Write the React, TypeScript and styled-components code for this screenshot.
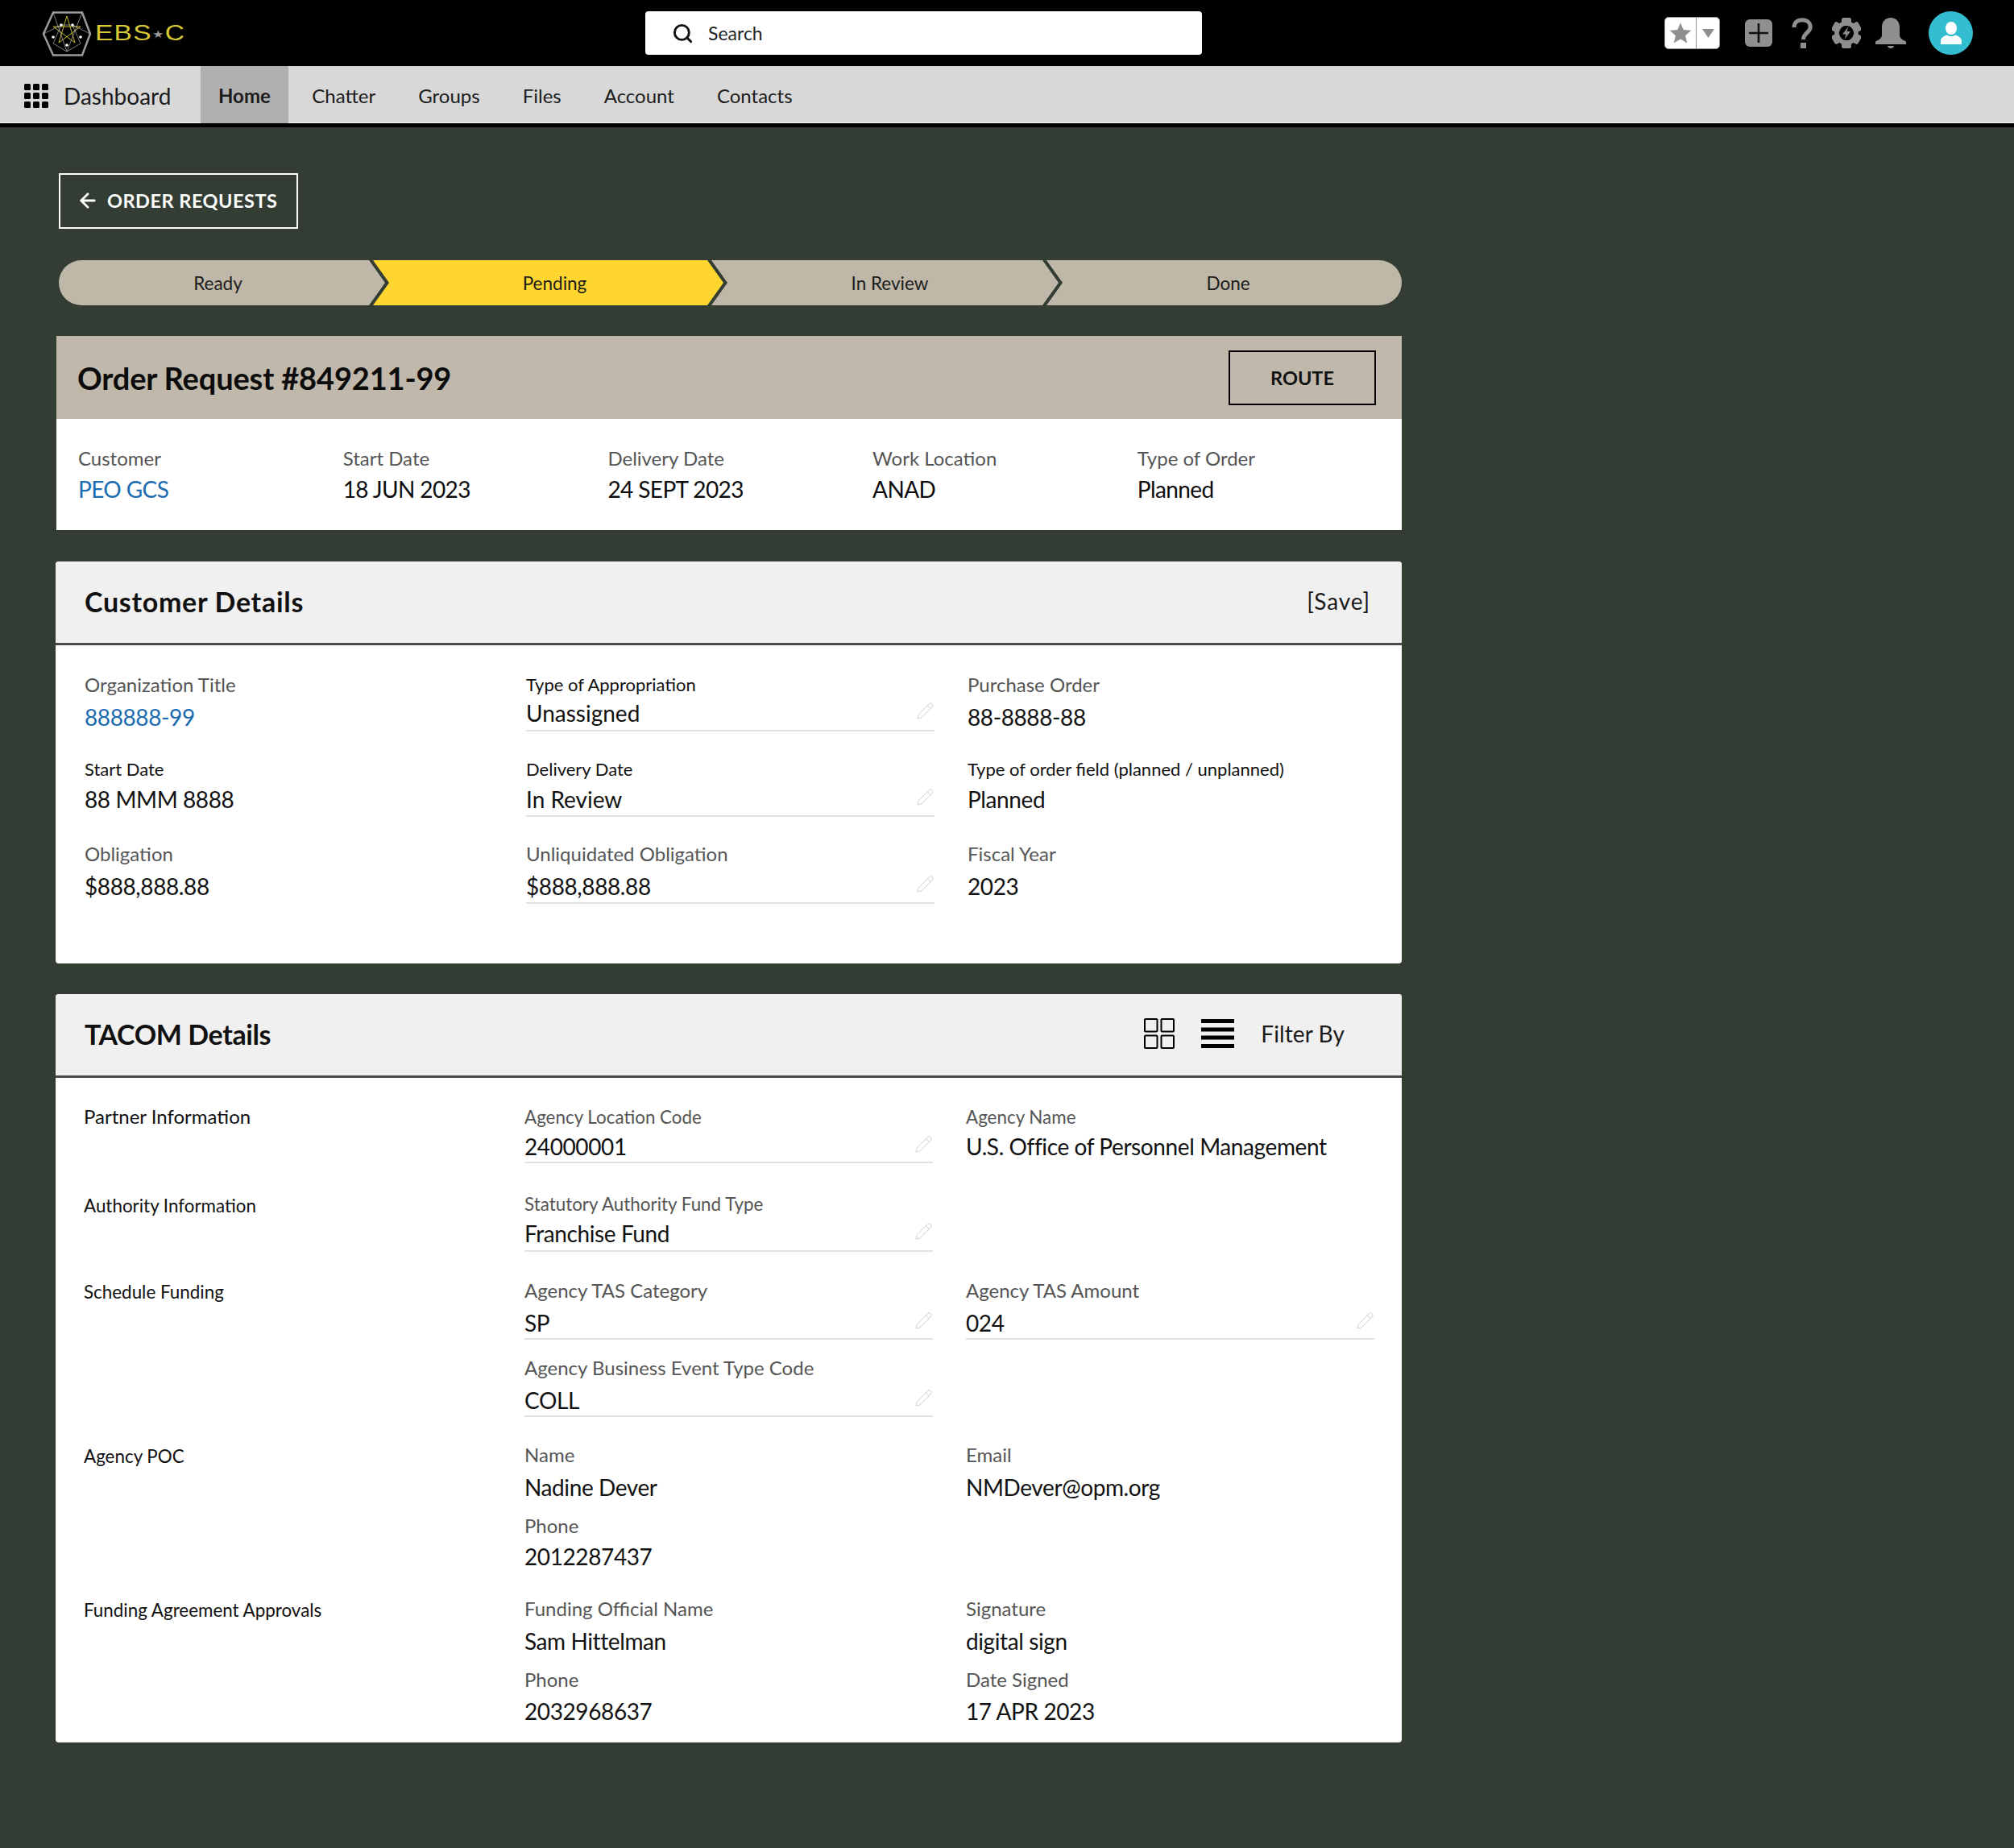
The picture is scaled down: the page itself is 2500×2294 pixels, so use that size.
import React from 'react';
import styled, { createGlobalStyle } from 'styled-components';
import { ArrowLeft, Pencil, Search } from 'lucide-react';

const GlobalStyle = createGlobalStyle`
  html, body { margin: 0; padding: 0; background: #333d34; }
  body { font-family: Lato, "Open Sans", sans-serif; color: #000; }
  * { box-sizing: border-box; }
`;

const Logo = () => (
  <LogoWrap>
    <svg width="62" height="56" viewBox="0 0 62 56" fill="none">
      <polygon points="14,1.5 50,1.5 60,28 50,54.500 14,54.500 2,28" stroke="#9a9a9a" strokeWidth="2.5" />
      <polygon points="31,6 41,39 14,19 48,19 21,39" stroke="#d8c93a" strokeWidth="0.9" />
      <path d="M24 17 L14 40 L31 50 L48 40 L38 17 Z M2 28 L24 17 M60 28 L38 17 M14 1.5 L31 50 M50 1.5 L31 50" stroke="#cfcfcf" strokeWidth="0.6" />
      {[[24, 17], [38, 17], [14, 32], [48, 32], [31, 42]].map(([cx, cy]) => (
        <circle key={`${cx}-${cy}`} cx={cx} cy={cy} r="1.8" fill="#fff" />
      ))}
    </svg>
    <LogoText>EBS<LogoStar>★</LogoStar>C</LogoText>
  </LogoWrap>
);

const AppsIcon = () => (
  <svg width="30" height="30" viewBox="0 0 30 30" fill="#000">
    {[0, 11, 22].map(y => [0, 11, 22].map(x => (
      <rect key={`${x}-${y}`} x={x} y={y} width="8" height="8" rx="1.5" />
    )))}
  </svg>
);

const HeaderIcons = () => (
  <IconBar>
    <FavButton>
      <FavPart $width={39}>
        <svg width="28" height="28" viewBox="0 0 24 24" fill="#8f8f8f">
          <polygon points="12,1 15.200,8.600 23.500,9.300 17.200,14.700 19.100,22.800 12,18.500 4.900,22.800 6.800,14.700 0.500,9.300 8.800,8.600" />
        </svg>
      </FavPart>
      <FavDivider />
      <FavPart $width={28}>
        <svg width="15" height="11" viewBox="0 0 15 11" fill="#8f8f8f"><polygon points="0,0 15,0 7.500,11" /></svg>
      </FavPart>
    </FavButton>
    <svg width="34" height="34" viewBox="0 0 34 34">
      <rect width="34" height="34" rx="6" fill="#8f8f8f" />
      <path d="M17 5v24M5 17h24" stroke="#111" strokeWidth="2.6" />
    </svg>
    <svg width="26" height="38" viewBox="0 0 26 38" fill="none">
      <path d="M3 12C3 6 7 2.800 13 2.800S23.200 6 23.200 11.500c0 7-8.700 7.500-8.700 15.500" stroke="#8f8f8f" strokeWidth="5" />
      <rect x="11" y="31" width="7" height="7" fill="#8f8f8f" />
    </svg>
    <svg width="36" height="38" viewBox="0 0 36 38">
      <g fill="#8f8f8f">
        {[0, 60, 120, 180, 240, 300].map(a => (
          <rect key={a} x="12" y="0" width="12" height="10" rx="2.500" transform={`rotate(${a} 18 19)`} />
        ))}
      </g>
      <circle cx="18" cy="19" r="12" fill="none" stroke="#8f8f8f" strokeWidth="5.500" />
      <path d="M20.500 11 L13 20.500 H17.500 L15.500 27 L23 17 H18.500 Z" fill="#8f8f8f" />
    </svg>
    <BellIcon width="38" height="38" viewBox="0 0 38 38" fill="#8f8f8f">
      <path d="M19 0c7 0 11 5 11 12v9c0 4 2.500 6 8 8.500V33H0v-3.500C5.500 27 8 25 8 21v-9C8 5 12 0 19 0Z" />
      <path d="M15 35h8c-.5 2-2 3-4 3s-3.500-1-4-3Z" />
    </BellIcon>
    <Avatar>
      <svg width="26" height="28" viewBox="0 0 26 28" fill="#fff">
        <ellipse cx="13" cy="8" rx="7" ry="8" />
        <path d="M0 28v-4c0-4 4-6.500 8-7.500 3 2 7 2 10 0 4 1 8 3.500 8 7.500v4Z" />
      </svg>
    </Avatar>
  </IconBar>
);

const steps = [
  { label: 'Ready', width: 405, shift: -5 },
  { label: 'Pending', width: 435, shift: 8, active: true },
  { label: 'In Review', width: 431, shift: 6 },
  { label: 'Done', width: 443, shift: 4 },
];

const summary = [
  { label: 'Customer', value: 'PEO GCS', link: true },
  { label: 'Start Date', value: '18 JUN 2023' },
  { label: 'Delivery Date', value: '24 SEPT 2023' },
  { label: 'Work Location', value: 'ANAD' },
  { label: 'Type of Order', value: 'Planned' },
];

type FieldProps = {
  label: string;
  value: string;
  height: number;
  strong?: boolean;
  small?: boolean;
  link?: boolean;
  editable?: boolean;
  loose?: boolean;
  gap?: number;
  valueHeight?: number;
};

const Field = ({ label, value, height, strong, small, link, editable, loose, gap = 4, valueHeight = 39 }: FieldProps) => (
  <FieldBox $height={height}>
    <FieldLabel $strong={strong} $small={small}>{label}</FieldLabel>
    <FieldValue $link={link} $editable={editable} $loose={loose} $gap={gap} $height={valueHeight}>
      {value}
      {editable && <EditIcon size={23} strokeWidth={1} color="#c9cdd1" />}
    </FieldValue>
  </FieldBox>
);

const App: React.FC = () => (
  <>
    <GlobalStyle />
    <TopBar>
      <Logo />
      <SearchBox>
        <Search size={27} strokeWidth={2.6} color="#111" />
        Search
      </SearchBox>
      <HeaderIcons />
    </TopBar>
    <NavBar>
      <AppName><AppsIcon />Dashboard</AppName>
      <NavItem $active>Home</NavItem>
      <NavItem>Chatter</NavItem>
      <NavItem>Groups</NavItem>
      <NavItem>Files</NavItem>
      <NavItem>Account</NavItem>
      <NavItem>Contacts</NavItem>
    </NavBar>

    <Page>
      <BackButton><ArrowLeft size={28} strokeWidth={2.4} />ORDER REQUESTS</BackButton>

      <Stepper>
        {steps.map((step, i) => (
          <Step key={step.label} $width={step.width} $shift={step.shift} $active={step.active} $first={i === 0} $last={i === steps.length - 1}>
            {step.label}
          </Step>
        ))}
      </Stepper>

      <OrderCard>
        <OrderHeader>
          <OrderTitle>Order Request #849211-99</OrderTitle>
          <RouteButton>ROUTE</RouteButton>
        </OrderHeader>
        <SummaryRow>
          {summary.map(item => (
            <div key={item.label}>
              <SummaryLabel>{item.label}</SummaryLabel>
              <SummaryValue $link={item.link}>{item.value}</SummaryValue>
            </div>
          ))}
        </SummaryRow>
      </OrderCard>

      <Card>
        <CardHeader>
          <CardTitle>Customer Details</CardTitle>
          <HeaderText>[Save]</HeaderText>
        </CardHeader>
        <CustomerGrid>
          <Field label="Organization Title" value="888888-99" height={105} link gap={7} />
          <Field label="Type of Appropriation" value="Unassigned" height={105} strong small editable loose gap={2} valueHeight={41} />
          <Field label="Purchase Order" value="88-8888-88" height={105} gap={7} />
          <Field label="Start Date" value="88 MMM 8888" height={105} strong small />
          <Field label="Delivery Date" value="In Review" height={105} strong small editable loose valueHeight={40} />
          <Field label="Type of order field (planned / unplanned)" value="Planned" height={105} strong small />
          <Field label="Obligation" value="$888,888.88" height={122} gap={7} />
          <Field label="Unliquidated Obligation" value="$888,888.88" height={122} editable gap={7} valueHeight={40} />
          <Field label="Fiscal Year" value="2023" height={122} gap={7} />
        </CustomerGrid>
      </Card>

      <Card $last>
        <CardHeader>
          <CardTitle $tight>TACOM Details</CardTitle>
          <ViewTools>
            <svg width="38" height="38" viewBox="0 0 38 38" fill="none" stroke="#000" strokeWidth="2">
              <rect x="1" y="1" width="15.500" height="15.500" rx="1" />
              <rect x="21.500" y="1" width="15.500" height="15.500" rx="1" />
              <rect x="1" y="21.500" width="15.500" height="15.500" rx="1" />
              <rect x="21.500" y="21.500" width="15.500" height="15.500" rx="1" />
            </svg>
            <svg width="41" height="36" viewBox="0 0 41 36" fill="#000">
              <rect width="41" height="5" />
              <rect y="10.500" width="41" height="5" />
              <rect y="20.500" width="41" height="5" />
              <rect y="31" width="41" height="5" />
            </svg>
            <HeaderText $tight>Filter By</HeaderText>
          </ViewTools>
        </CardHeader>
        <TacomBody>
          <TacomRow>
            <RowTitle $large>Partner Information</RowTitle>
            <Field label="Agency Location Code" value="24000001" height={108} small editable gap={3} />
            <Field label="Agency Name" value="U.S. Office of Personnel Management" height={108} small gap={3} />
          </TacomRow>
          <TacomRow>
            <RowTitle>Authority Information</RowTitle>
            <Field label="Statutory Authority Fund Type" value="Franchise Fund" height={107} small editable gap={3} valueHeight={41} />
          </TacomRow>
          <TacomRow>
            <RowTitle>Schedule Funding</RowTitle>
            <Field label="Agency TAS Category" value="SP" height={96} editable gap={7} />
            <Field label="Agency TAS Amount" value="024" height={96} editable gap={7} />
          </TacomRow>
          <TacomRow>
            <span />
            <Field label="Agency Business Event Type Code" value="COLL" height={108} editable gap={7} />
          </TacomRow>
          <TacomRow>
            <RowTitle>Agency POC</RowTitle>
            <div>
              <Field label="Name" value="Nadine Dever" height={88} gap={7} />
              <Field label="Phone" value="2012287437" height={103} gap={5} />
            </div>
            <Field label="Email" value="NMDever@opm.org" height={88} gap={7} />
          </TacomRow>
          <TacomRow>
            <RowTitle>Funding Agreement Approvals</RowTitle>
            <div>
              <Field label="Funding Official Name" value="Sam Hittelman" height={88} gap={7} />
              <Field label="Phone" value="2032968637" height={93} gap={6} />
            </div>
            <div>
              <Field label="Signature" value="digital sign" height={88} gap={7} />
              <Field label="Date Signed" value="17 APR 2023" height={93} gap={6} />
            </div>
          </TacomRow>
        </TacomBody>
      </Card>
    </Page>
  </>
);

export default App;

const TopBar = styled.header`
  height: 82px;
  background: #000;
  display: flex;
  align-items: center;
  position: relative;
  padding-left: 52px;
`;

const LogoWrap = styled.div`
  display: flex;
  align-items: center;
  gap: 4px;
  width: 749px;
  padding-top: 1px;
`;

const LogoText = styled.span`
  display: inline-block;
  font-family: "Liberation Sans", sans-serif;
  font-size: 27px;
  color: #d9c835;
  letter-spacing: 1px;
  transform: scaleX(1.24);
  transform-origin: left center;
  white-space: nowrap;
`;

const LogoStar = styled.span`
  font-size: 13px;
  color: #9a9a9a;
  vertical-align: 3px;
`;

const SearchBox = styled.div`
  width: 691px;
  height: 54px;
  background: #fff;
  border-radius: 4px;
  display: flex;
  align-items: center;
  gap: 18px;
  padding-left: 33px;
  font-size: 23px;
  color: #222;
`;

const IconBar = styled.div`
  margin-left: 574px;
  display: flex;
  align-items: center;
  gap: 24px;
`;

const FavButton = styled.div`
  width: 69px;
  height: 40px;
  background: #fff;
  border: 1px solid #999;
  border-radius: 5px;
  display: flex;
  margin-right: 7px;
`;

const FavPart = styled.div<{ $width: number }>`
  width: ${p => p.$width}px;
  display: flex;
  align-items: center;
  justify-content: center;
`;

const FavDivider = styled.div`
  width: 1px;
  background: #8f8f8f;
`;

const BellIcon = styled.svg`
  margin-left: -6px;
`;

const Avatar = styled.div`
  width: 55px;
  height: 54px;
  margin-left: 4px;
  border-radius: 50%;
  background: #33bdd0;
  display: flex;
  align-items: center;
  justify-content: center;
`;

const NavBar = styled.nav`
  height: 76px;
  background: #d8d8d8;
  border-bottom: 5px solid #000;
  box-shadow: inset 0 -1px 0 #f4f4f4;
  display: flex;
  align-items: stretch;
  font-size: 24px;
`;

const AppName = styled.div`
  width: 249px;
  padding: 2px 0 0 30px;
  display: flex;
  align-items: center;
  gap: 19px;
  font-size: 28px;
  color: #1c1c1c;
`;

const NavItem = styled.div<{ $active?: boolean }>`
  display: flex;
  align-items: center;
  padding: 2px ${p => (p.$active ? '22px' : '26.5px')} 0;
  ${p => p.$active && 'margin-right: 3px; background: #b0b0b0; font-weight: 700;'}
  color: #1c1c1c;
`;

const Page = styled.main`
  padding: 57px 0 130px 70px;
  width: 1741px;
  min-height: 2136px;
`;

const BackButton = styled.button`
  margin-left: 3px;
  width: 297px;
  height: 69px;
  background: transparent;
  border: 2px solid #fff;
  color: #fff;
  font-family: Lato, sans-serif;
  font-size: 23.5px;
  font-weight: 700;
  letter-spacing: 0.5px;
  display: flex;
  align-items: center;
  gap: 10px;
  padding: 0 0 2px 20px;
`;

const Stepper = styled.div`
  margin: 39px 0 38px 3px;
  height: 56px;
  display: flex;
  border-radius: 28px;
  overflow: hidden;
  width: 1667px;
`;

const Step = styled.div<{ $width: number; $shift: number; $active?: boolean; $first?: boolean; $last?: boolean }>`
  flex: 0 0 ${p => p.$width}px;
  margin-left: ${p => (p.$first ? 0 : -15)}px;
  padding-left: ${p => (p.$shift > 0 ? p.$shift * 2 : 0)}px;
  padding-right: ${p => (p.$shift < 0 ? -p.$shift * 2 : 0)}px;
  background: ${p => (p.$active ? '#ffd630' : '#bfb8a8')};
  color: #1c1c1c;
  font-size: 22.5px;
  display: flex;
  align-items: center;
  justify-content: center;
  clip-path: polygon(${p => (p.$first
    ? '0 0, calc(100% - 20px) 0, 100% 50%, calc(100% - 20px) 100%, 0 100%'
    : p.$last
      ? '0 0, 100% 0, 100% 100%, 0 100%, 20px 50%'
      : '0 0, calc(100% - 20px) 0, 100% 50%, calc(100% - 20px) 100%, 0 100%, 20px 50%')});
`;

const OrderCard = styled.section`
  margin-bottom: 39px;
  width: 1670px;
`;

const OrderHeader = styled.div`
  height: 103px;
  background: #c0b8aa;
  display: flex;
  align-items: center;
  justify-content: space-between;
  padding: 0 32px 0 26px;
`;

const OrderTitle = styled.h1`
  margin: 0;
  font-size: 38px;
  font-weight: 700;
  letter-spacing: -0.15px;
  color: #0c0c0c;
`;

const RouteButton = styled.button`
  width: 183px;
  height: 68px;
  background: transparent;
  border: 2px solid #000;
  font-family: Lato, sans-serif;
  font-size: 23.5px;
  font-weight: 700;
  color: #111;
`;

const SummaryRow = styled.div`
  height: 138px;
  background: #fff;
  display: grid;
  grid-template-columns: repeat(5, 328.7px);
  padding: 32px 0 0 27px;
`;

const SummaryLabel = styled.div`
  font-size: 24px;
  line-height: 34px;
  color: #555;
`;

const SummaryValue = styled.div<{ $link?: boolean }>`
  margin-top: 3px;
  font-size: 28px;
  line-height: 36px;
  letter-spacing: -0.6px;
  color: ${p => (p.$link ? '#1a6bb0' : '#0c0c0c')};
`;

const Card = styled.section<{ $last?: boolean }>`
  width: 1671px;
  margin-left: -1px;
  margin-bottom: ${p => (p.$last ? 0 : 38)}px;
  background: #fff;
  border-radius: 4px;
  overflow: hidden;
`;

const CardHeader = styled.div`
  height: 104px;
  background: #f1f0f0;
  border-bottom: 3px solid #4a4a4a;
  display: flex;
  align-items: center;
  justify-content: space-between;
  padding: 0 39px 3px 36px;
`;

const CardTitle = styled.h2<{ $tight?: boolean }>`
  margin: 0;
  font-size: 34px;
  font-weight: 700;
  letter-spacing: ${p => (p.$tight ? -0.4 : 0.7)}px;
  color: #111;
`;

const HeaderText = styled.span<{ $tight?: boolean }>`
  font-size: 28px;
  letter-spacing: ${p => (p.$tight ? 0.1 : 0.9)}px;
  color: #1a1a1a;
`;

const ViewTools = styled.div`
  display: flex;
  align-items: center;
  gap: 33px;
  padding-right: 32px;
`;

const CustomerGrid = styled.div`
  display: grid;
  grid-template-columns: 548px 548px 507px;
  padding: 34px 0 29px 36px;
`;

const TacomBody = styled.div`
  padding: 34px 0 0 35px;
`;

const TacomRow = styled.div`
  display: grid;
  grid-template-columns: 506px 507px 507px;
  column-gap: 41px;
`;

const RowTitle = styled.div<{ $large?: boolean }>`
  font-size: ${p => (p.$large ? 24 : 22.4)}px;
  line-height: 30px;
  padding-top: 2px;
  margin-top: ${p => (p.$large ? -3 : 0)}px;
  color: #111;
`;

const FieldBox = styled.div<{ $height: number }>`
  height: ${p => p.$height}px;
  max-width: 507px;
`;

const FieldLabel = styled.div<{ $strong?: boolean; $small?: boolean }>`
  font-size: ${p => (p.$strong ? 22 : p.$small ? 22.4 : 24)}px;
  line-height: 30px;
  color: ${p => (p.$strong ? '#111' : '#555')};
`;

const FieldValue = styled.div<{ $link?: boolean; $editable?: boolean; $loose?: boolean; $gap: number; $height: number }>`
  margin-top: ${p => p.$gap}px;
  font-size: 28px;
  line-height: 36px;
  letter-spacing: ${p => (p.$loose ? 0 : -0.4)}px;
  height: ${p => p.$height}px;
  color: ${p => (p.$link ? '#1a6bb0' : '#111')};
  display: flex;
  justify-content: space-between;
  ${p => p.$editable && 'border-bottom: 2px solid #dfe1e4;'}
`;

const EditIcon = styled(Pencil)`
  margin-top: 4px;
`;
